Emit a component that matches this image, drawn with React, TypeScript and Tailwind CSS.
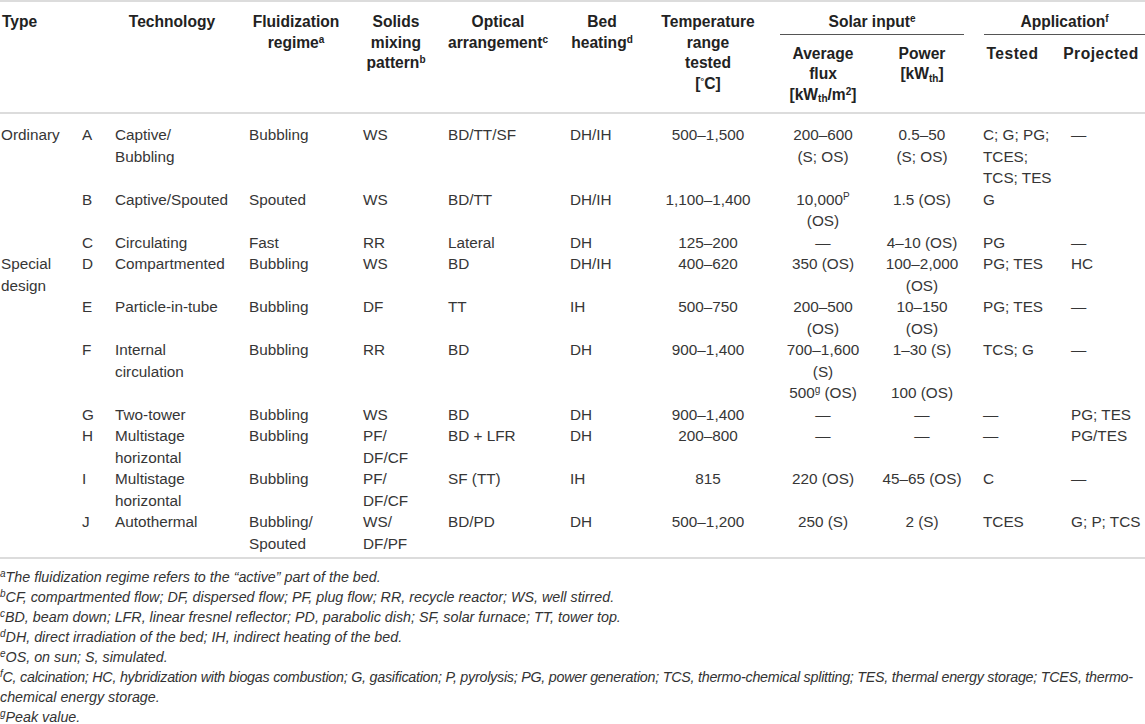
import React from "react";

type Cell = React.ReactNode;

const S = ({ children }: { children: React.ReactNode }) => (
  <sup className="text-[10px]">{children}</sup>
);

const lines = (...ls: React.ReactNode[]) => (
  <>
    {ls.map((l, i) => (
      <div key={i} className="min-h-[21.5px]">
        {l}
      </div>
    ))}
  </>
);

const rows: Cell[][] = [
  [
    "Ordinary",
    "A",
    lines("Captive/", "Bubbling"),
    "Bubbling",
    "WS",
    "BD/TT/SF",
    "DH/IH",
    "500–1,500",
    lines("200–600", "(S; OS)"),
    lines("0.5–50", "(S; OS)"),
    lines("C; G; PG;", "TCES;", "TCS; TES"),
    "—",
  ],
  [
    "",
    "B",
    "Captive/Spouted",
    "Spouted",
    "WS",
    "BD/TT",
    "DH/IH",
    "1,100–1,400",
    lines(
      <>
        10,000<S>P</S>
      </>,
      "(OS)"
    ),
    "1.5 (OS)",
    "G",
    "",
  ],
  ["", "C", "Circulating", "Fast", "RR", "Lateral", "DH", "125–200", "—", "4–10 (OS)", "PG", "—"],
  [
    lines("Special", "design"),
    "D",
    "Compartmented",
    "Bubbling",
    "WS",
    "BD",
    "DH/IH",
    "400–620",
    "350 (OS)",
    lines("100–2,000", "(OS)"),
    "PG; TES",
    "HC",
  ],
  [
    "",
    "E",
    "Particle-in-tube",
    "Bubbling",
    "DF",
    "TT",
    "IH",
    "500–750",
    lines("200–500", "(OS)"),
    lines("10–150", "(OS)"),
    "PG; TES",
    "—",
  ],
  [
    "",
    "F",
    lines("Internal", "circulation"),
    "Bubbling",
    "RR",
    "BD",
    "DH",
    "900–1,400",
    lines(
      "700–1,600",
      "(S)",
      <>
        500<S>g</S> (OS)
      </>
    ),
    lines("1–30 (S)", "", "100 (OS)"),
    "TCS; G",
    "—",
  ],
  ["", "G", "Two-tower", "Bubbling", "WS", "BD", "DH", "900–1,400", "—", "—", "—", "PG; TES"],
  [
    "",
    "H",
    lines("Multistage", "horizontal"),
    "Bubbling",
    lines("PF/", "DF/CF"),
    "BD + LFR",
    "DH",
    "200–800",
    "—",
    "—",
    "—",
    "PG/TES",
  ],
  [
    "",
    "I",
    lines("Multistage", "horizontal"),
    "Bubbling",
    lines("PF/", "DF/CF"),
    "SF (TT)",
    "IH",
    "815",
    "220 (OS)",
    "45–65 (OS)",
    "C",
    "—",
  ],
  [
    "",
    "J",
    "Autothermal",
    lines("Bubbling/", "Spouted"),
    lines("WS/", "DF/PF"),
    "BD/PD",
    "DH",
    "500–1,200",
    "250 (S)",
    "2 (S)",
    "TCES",
    "G; P; TCS",
  ],
];

const cellCls = [
  "w-[80px] pl-[1px]",
  "w-[33px] pl-[2px]",
  "w-[134px] pl-[2px]",
  "w-[114px] pl-[2px]",
  "w-[85px] pl-[2px]",
  "w-[122px] pl-[2px]",
  "w-[82px] pl-[2px]",
  "w-[116px] text-center",
  "w-[114px] text-center",
  "w-[84px] text-center whitespace-nowrap",
  "w-[91px] pl-[19px]",
  "w-[90px] pl-[16px] whitespace-nowrap",
];

const HS = ({ children }: { children: React.ReactNode }) => (
  <sup className="text-[10px] font-bold">{children}</sup>
);

const FS = ({ children }: { children: React.ReactNode }) => (
  <sup className="text-[10px]">{children}</sup>
);

export default function App() {
  return (
    <div
      className="w-[1145px] bg-white text-[#363636]"
      style={{ fontFamily: '"Liberation Sans", Arial, sans-serif' }}
    >
      {/* Header */}
      <div className="flex h-[114px] whitespace-nowrap border-t-2 border-b-2 border-[#dcdcdc] text-[15.6px] font-bold leading-[20.5px] text-[#222]">
        <div className="w-[80px] pl-[2px] pt-[10px]">Type</div>
        <div className="w-[33px]" />
        <div className="w-[134px] pr-[16px] pt-[10px] text-center">Technology</div>
        <div className="w-[114px] pr-[16px] pt-[10px] text-center">
          <div>Fluidization</div>
          <div>
            regime<HS>a</HS>
          </div>
        </div>
        <div className="w-[85px] pr-[15px] pt-[10px] text-center">
          <div>Solids</div>
          <div>mixing</div>
          <div>
            pattern<HS>b</HS>
          </div>
        </div>
        <div className="w-[122px] pr-[18px] pt-[10px] text-center">
          <div>Optical</div>
          <div>
            arrangement<HS>c</HS>
          </div>
        </div>
        <div className="w-[82px] pr-[14px] pt-[10px] text-center">
          <div>Bed</div>
          <div>
            heating<HS>d</HS>
          </div>
        </div>
        <div className="w-[116px] pt-[10px] text-center">
          <div>Temperature</div>
          <div>range</div>
          <div>tested</div>
          <div>
            [<sup className="text-[9px]">°</sup>C]
          </div>
        </div>
        <div className="w-[198px] pt-[10px]">
          <div className="ml-[14px] border-b border-[#555] pb-[1px] text-center">
            Solar input<HS>e</HS>
          </div>
          <div className="mt-[9px] flex">
            <div className="w-[114px] text-center">
              <div>Average</div>
              <div>flux</div>
              <div>
                [kW<sub className="text-[10px]">th</sub>/m<sup className="text-[10px]">2</sup>]
              </div>
            </div>
            <div className="w-[84px] text-center">
              <div>Power</div>
              <div>
                [kW<sub className="text-[10px]">th</sub>]
              </div>
            </div>
          </div>
        </div>
        <div className="w-[181px] pt-[10px]">
          <div className="ml-[20px] border-b border-[#555] pb-[1px] text-center">
            Application<HS>f</HS>
          </div>
          <div className="mt-[9px] flex">
            <div className="w-[91px] pl-[6px] text-center tracking-[0.5px]">Tested</div>
            <div className="w-[90px] pl-[2px] text-center tracking-[0.5px]">Projected</div>
          </div>
        </div>
      </div>

      {/* Body */}
      <div className="border-b-2 border-[#dcdcdc] pt-[10px] pb-[3px] text-[15.3px] leading-[21.5px]">
        {rows.map((r, i) => (
          <div key={i} className="flex">
            {r.map((c, j) => (
              <div key={j} className={cellCls[j]}>
                {c}
              </div>
            ))}
          </div>
        ))}
      </div>

      {/* Footnotes */}
      <div className="pt-[8px] text-[14.3px] italic leading-[20px] text-[#333]">
        <div>
          <FS>a</FS>The fluidization regime refers to the “active” part of the bed.
        </div>
        <div>
          <FS>b</FS>CF, compartmented flow; DF, dispersed flow; PF, plug flow; RR, recycle reactor; WS, well stirred.
        </div>
        <div>
          <FS>c</FS>BD, beam down; LFR, linear fresnel reflector; PD, parabolic dish; SF, solar furnace; TT, tower top.
        </div>
        <div>
          <FS>d</FS>DH, direct irradiation of the bed; IH, indirect heating of the bed.
        </div>
        <div>
          <FS>e</FS>OS, on sun; S, simulated.
        </div>
        <div className="whitespace-nowrap tracking-[-0.25px]">
          <FS>f</FS>C, calcination; HC, hybridization with biogas combustion; G, gasification; P, pyrolysis; PG, power generation; TCS, thermo-chemical splitting; TES, thermal energy storage; TCES, thermo-
        </div>
        <div>chemical energy storage.</div>
        <div>
          <FS>g</FS>Peak value.
        </div>
      </div>
    </div>
  );
}
